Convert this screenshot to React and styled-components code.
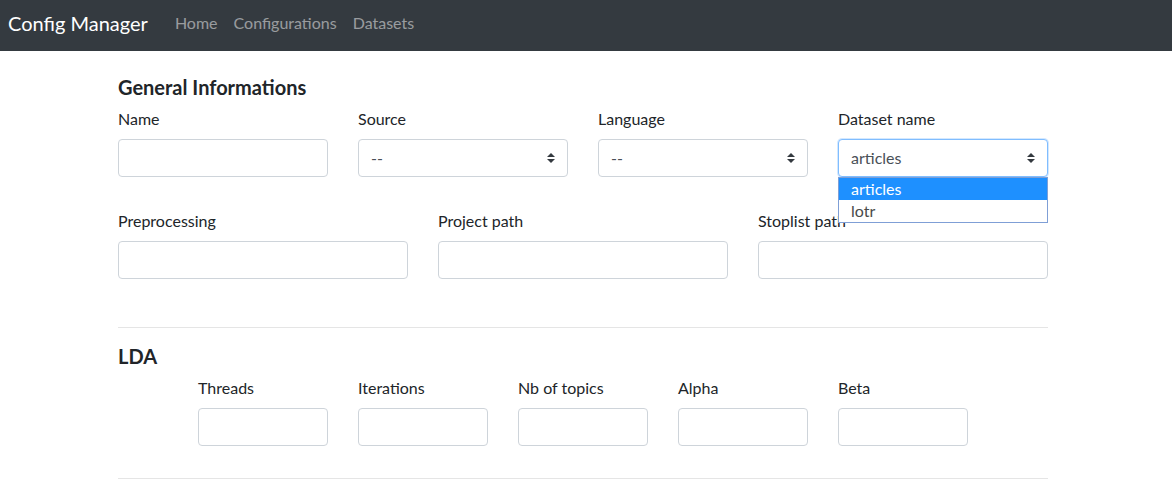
import React from 'react';
import styled, { createGlobalStyle } from 'styled-components';

const GlobalStyle = createGlobalStyle`
  * {
    box-sizing: border-box;
  }
  body {
    margin: 0;
    background: #fff;
    color: #212529;
    font-family: Lato, "Open Sans", sans-serif;
    font-size: 16px;
    line-height: 1.5;
  }
`;

const Navbar = styled.nav`
  height: 51px;
  background-color: #343a40;
  display: flex;
  align-items: center;
  padding: 0 8px 5px;
`;

const Brand = styled.a`
  color: #fff;
  font-size: 20px;
  line-height: 30px;
  margin-right: 19px;
  text-decoration: none;
`;

const NavLinks = styled.div`
  display: flex;
`;

const NavLink = styled.a`
  color: rgba(255, 255, 255, 0.5);
  padding: 0 8px;
  font-size: 16px;
  text-decoration: none;
`;

const Container = styled.main`
  width: 930px;
  margin-left: 118px;
  padding-top: 24px;
`;

const SectionTitle = styled.h5`
  margin: 0 0 8px;
  font-size: 20px;
  line-height: 24px;
  font-weight: 700;
  color: #212529;
`;

const FormRow = styled.div`
  display: grid;
  grid-template-columns: repeat(${(p) => p.cols}, ${(p) => p.colWidth}px);
  column-gap: 30px;
  padding-left: ${(p) => p.offset || 0}px;
  margin-bottom: ${(p) => p.spacing}px;
`;

const Field = styled.div`
  display: flex;
  flex-direction: column;
`;

const Label = styled.label`
  display: block;
  margin-bottom: 8px;
  line-height: 24px;
  color: #212529;
`;

const Input = styled.input`
  display: block;
  width: 100%;
  height: 38px;
  padding: 6px 12px;
  font: inherit;
  color: #495057;
  background: #fff;
  border: 1px solid #ced4da;
  border-radius: 4px;
  outline: none;
`;

const SelectWrap = styled.div`
  position: relative;
`;

const SelectBox = styled.div`
  height: 38px;
  display: flex;
  align-items: center;
  justify-content: space-between;
  padding: 0 12px;
  color: #495057;
  background: #fff;
  border: 1px solid ${(p) => (p.focused ? '#80bdff' : '#ced4da')};
  border-radius: 4px;
  box-shadow: ${(p) => (p.focused ? '0 0 0 1px rgba(128, 189, 255, 0.35)' : 'none')};
`;

const OptionList = styled.ul`
  position: absolute;
  top: 100%;
  left: 0;
  right: 0;
  margin: 0;
  padding: 0;
  list-style: none;
  background: #fff;
  border: 1px solid #7f9fd6;
  z-index: 10;
`;

const Option = styled.li`
  height: 22px;
  line-height: 22px;
  padding: 0 12px;
  color: ${(p) => (p.active ? '#fff' : '#4a4a4a')};
  background: ${(p) => (p.active ? '#1e90ff' : 'transparent')};
`;

const Divider = styled.hr`
  margin: 0 0 ${(p) => p.after || 0}px;
  border: 0;
  border-top: 1px solid rgba(0, 0, 0, 0.1);
`;

const Arrows = () => (
  <svg width="8" height="10" viewBox="0 0 4 5">
    <path d="M2 0L0 2h4zm0 5L0 3h4z" fill="#343a40" />
  </svg>
);

const Select = ({ value, focused, options }) => (
  <SelectWrap>
    <SelectBox focused={focused}>
      <span>{value}</span>
      <Arrows />
    </SelectBox>
    {options && (
      <OptionList>
        {options.map((o, i) => (
          <Option key={o} active={i === 0}>
            {o}
          </Option>
        ))}
      </OptionList>
    )}
  </SelectWrap>
);

const TextField = ({ label }) => (
  <Field>
    <Label>{label}</Label>
    <Input type="text" />
  </Field>
);

const ldaFields = ['Threads', 'Iterations', 'Nb of topics', 'Alpha', 'Beta'];

const App = () => (
  <>
    <GlobalStyle />
    <Navbar>
      <Brand href="#">Config Manager</Brand>
      <NavLinks>
        <NavLink href="#">Home</NavLink>
        <NavLink href="#">Configurations</NavLink>
        <NavLink href="#">Datasets</NavLink>
      </NavLinks>
    </Navbar>
    <Container>
      <SectionTitle>General Informations</SectionTitle>
      <FormRow cols={4} colWidth={210} spacing={32}>
        <TextField label="Name" />
        <Field>
          <Label>Source</Label>
          <Select value="--" />
        </Field>
        <Field>
          <Label>Language</Label>
          <Select value="--" />
        </Field>
        <Field>
          <Label>Dataset name</Label>
          <Select value="articles" focused options={['articles', 'lotr']} />
        </Field>
      </FormRow>
      <FormRow cols={3} colWidth={290} spacing={48}>
        <TextField label="Preprocessing" />
        <TextField label="Project path" />
        <TextField label="Stoplist path" />
      </FormRow>
      <Divider after={16} />
      <SectionTitle>LDA</SectionTitle>
      <FormRow cols={5} colWidth={130} offset={80} spacing={32}>
        {ldaFields.map((f) => (
          <TextField key={f} label={f} />
        ))}
      </FormRow>
      <Divider />
    </Container>
  </>
);

export default App;
